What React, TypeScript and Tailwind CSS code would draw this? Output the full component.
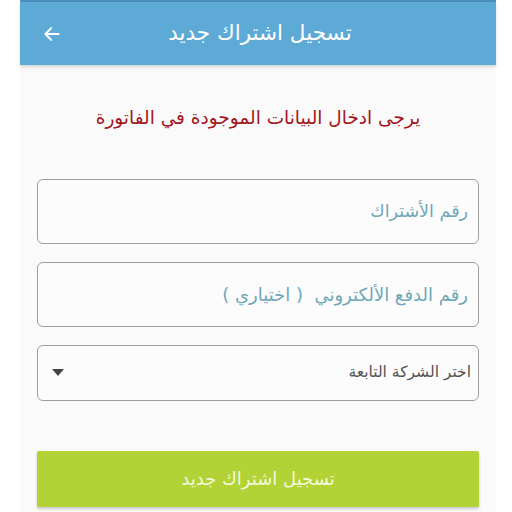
import React from "react";

export default function App() {
  const font = { fontFamily: '"DejaVu Sans", "Noto Sans", sans-serif' };
  return (
    <div className="w-[512px] h-[512px] bg-white overflow-hidden" style={font}>
      <div className="mx-[20px] w-[476px] h-[512px] bg-[#fafafa] flex flex-col">
        <div className="h-[2px] bg-[#4a8fb9]" />
        <div className="h-[63px] bg-[#5eaad7] flex items-center relative shadow-[0_2px_3px_rgba(0,0,0,0.15)]">
          <svg className="absolute left-[22px] top-[22px]" width="20" height="20" viewBox="0 0 24 24" fill="none" stroke="white" strokeWidth="2.4" strokeLinecap="round" strokeLinejoin="round">
            <path d="M20 12H4M11 5l-7 7 7 7" />
          </svg>
          <div dir="rtl" className="w-full text-center text-white text-[21.5px] pl-[4px]">تسجيل اشتراك جديد</div>
        </div>
        <div className="flex flex-col px-[17px]">
          <div dir="rtl" className="mt-[39px] text-center text-[#a3151d] text-[18.5px]">يرجى ادخال البيانات الموجودة في الفاتورة</div>
          <div dir="rtl" className="mt-[47px] h-[65px] border border-[#9e9e9e] rounded-[6px] bg-[#fcfcfc] flex items-center pr-[10px] text-[17.5px] text-[#6fa7b8]">رقم الأشتراك</div>
          <div dir="rtl" className="mt-[18px] h-[65px] border border-[#9e9e9e] rounded-[6px] bg-[#fcfcfc] flex items-center pr-[10px] text-[18px] text-[#6fa7b8]">رقم الدفع الألكتروني&nbsp; ( اختياري )</div>
          <div dir="rtl" className="mt-[18px] h-[56px] border border-[#9e9e9e] rounded-[6px] bg-[#fcfcfc] flex items-center justify-between pr-[7px] pl-[14px] text-[15.5px] text-[#555]">
            <span>اختر الشركة التابعة</span>
            <svg width="12" height="7" viewBox="0 0 12 7"><path d="M0 0h12L6 7z" fill="#444" /></svg>
          </div>
          <div dir="rtl" className="mt-[50px] h-[56px] bg-[#b2d235] rounded-[2px] shadow-[0_2px_3px_rgba(0,0,0,0.2)] flex items-center justify-center text-[18px] text-[#f4f8dc]">تسجيل اشتراك جديد</div>
        </div>
      </div>
    </div>
  );
}
